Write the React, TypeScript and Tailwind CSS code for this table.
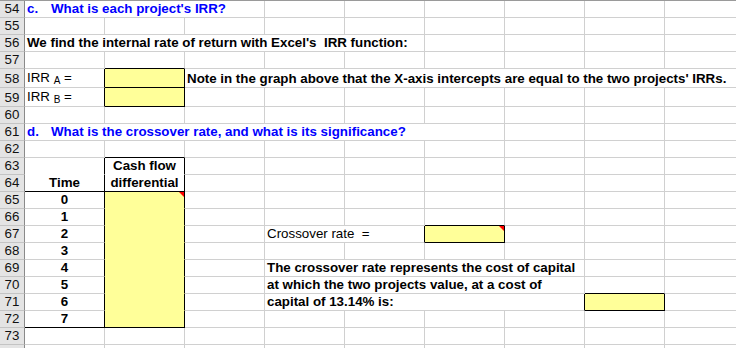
import React from 'react';

// Excel-ish sheet: header column 25px, data columns 80px, rows 17px
const SPAN_W: Record<number, string> = {
  1: 'w-[80px]',
  2: 'w-[160px]',
  3: 'w-[240px]',
  4: 'w-[320px]',
  5: 'w-[400px]',
  6: 'w-[480px]',
  7: 'w-[560px]',
};

const GRID_R = 'border-r-[#d0d0d0]';
const GRID_B = 'border-b-[#d0d0d0]';
const BLK_R = 'border-r-black';
const BLK_B = 'border-b-black';
const YEL = 'bg-[#ffff99]';

interface CellProps {
  span?: number;
  rb?: string;
  bb?: string;
  bg?: string;
  center?: boolean;
  comment?: boolean;
  children?: React.ReactNode;
}

const Cell: React.FC<CellProps> = ({
  span = 1,
  rb = GRID_R,
  bb = GRID_B,
  bg = 'bg-white',
  center = false,
  comment = false,
  children,
}) => (
  <div
    className={`relative flex h-full shrink-0 items-end border-r border-b ${SPAN_W[span]} ${rb} ${bb} ${bg} ${
      center ? 'justify-center' : 'justify-start pl-[2px]'
    }`}
  >
    {children !== undefined && <span className="whitespace-pre leading-[16px]">{children}</span>}
    {comment && (
      <span className="absolute right-0 top-0 h-0 w-0 border-l-[5px] border-t-[5px] border-l-transparent border-t-[#ff0000]" />
    )}
  </div>
);

interface RowProps {
  n?: number;
  tall?: boolean;
  children?: React.ReactNode;
}

const Row: React.FC<RowProps> = ({ n, tall = false, children }) => {
  // pad the row out with empty cells so the grid runs to the right edge
  let used = 0;
  React.Children.forEach(children, (c) => {
    if (React.isValidElement<CellProps>(c)) used += c.props.span ?? 1;
  });
  const pad = Array.from({ length: Math.max(0, 9 - used) }, (_, i) => <Cell key={`pad-${i}`} />);

  return (
    <div className={`flex ${tall ? 'h-[19px]' : 'h-[17px]'}`}>
      <div className="flex w-[25px] shrink-0 items-end justify-center border-r border-b border-r-[#8a8a8a] border-b-[#c4c4c4] bg-[#e4e4e4] leading-[16px] text-[#111]">
        {n}
      </div>
      {children}
      {pad}
    </div>
  );
};

const Blue: React.FC<{ label: string; text: string }> = ({ label, text }) => (
  <span className="font-bold text-[#0000ff]">
    <span className="inline-block w-[24px]">{label}</span>
    {text}
  </span>
);

const Sub: React.FC<{ l: string }> = ({ l }) => (
  <>
    IRR <span className="relative top-[2px] text-[10px]">{l}</span> =
  </>
);

export default function App() {
  const times = [0, 1, 2, 3, 4, 5, 6, 7];

  return (
    <div className="h-[348px] w-[736px] overflow-hidden bg-white font-['Liberation_Sans',Arial,sans-serif] text-[13.33px] text-black">
      <div className="h-px w-full bg-[#9a9a9a]" />

      <Row n={54}>
        <Cell span={3}>
          <Blue label="c." text="What is each project's IRR?" />
        </Cell>
      </Row>
      <Row n={55} />
      <Row n={56}>
        <Cell span={5}>
          <b>We find the internal rate of return with Excel's  IRR function:</b>
        </Cell>
      </Row>
      <Row n={57}>
        <Cell />
        <Cell bb={BLK_B} />
      </Row>
      <Row n={58} tall>
        <Cell rb={BLK_R}>
          <Sub l="A" />
        </Cell>
        <Cell rb={BLK_R} bb={BLK_B} bg={YEL} />
        <Cell span={7}>
          <b>Note in the graph above that the X-axis intercepts are equal to the two projects' IRRs.</b>
        </Cell>
      </Row>
      <Row n={59} tall>
        <Cell rb={BLK_R}>
          <Sub l="B" />
        </Cell>
        <Cell rb={BLK_R} bb={BLK_B} bg={YEL} />
      </Row>
      <Row n={60} />
      <Row n={61}>
        <Cell span={6}>
          <Blue label="d." text="What is the crossover rate, and what is its significance?" />
        </Cell>
      </Row>
      <Row n={62}>
        <Cell />
        <Cell bb={BLK_B} />
      </Row>
      <Row n={63}>
        <Cell rb={BLK_R} bb="border-b-white" />
        <Cell rb={BLK_R} bb="border-b-white" center>
          <b>Cash flow</b>
        </Cell>
      </Row>
      <Row n={64}>
        <Cell rb={BLK_R} bb={BLK_B} center>
          <b>Time</b>
        </Cell>
        <Cell rb={BLK_R} bb={BLK_B} center>
          <b>differential</b>
        </Cell>
      </Row>

      {times.map((t) => {
        const last = t === 7;
        return (
          <Row key={t} n={65 + t}>
            <Cell rb={BLK_R} bb={last ? BLK_B : GRID_B} center>
              <b>{t}</b>
            </Cell>
            <Cell rb={BLK_R} bb={last ? BLK_B : 'border-b-[#ffff99]'} bg={YEL} comment={t === 0} />
            {t === 1 && (
              <>
                <Cell />
                <Cell />
                <Cell />
                <Cell bb={BLK_B} />
              </>
            )}
            {t === 2 && (
              <>
                <Cell />
                <Cell span={2} rb={BLK_R}>
                  Crossover rate  =
                </Cell>
                <Cell rb={BLK_R} bb={BLK_B} bg={YEL} comment />
              </>
            )}
            {t === 4 && (
              <>
                <Cell />
                <Cell span={4}>
                  <b>The crossover rate represents the cost of capital</b>
                </Cell>
              </>
            )}
            {t === 5 && (
              <>
                <Cell />
                <Cell span={4}>
                  <b>at which the two projects value, at a cost of</b>
                </Cell>
                <Cell bb={BLK_B} />
              </>
            )}
            {t === 6 && (
              <>
                <Cell />
                <Cell span={4} rb={BLK_R}>
                  <b>capital of 13.14% is:</b>
                </Cell>
                <Cell rb={BLK_R} bb={BLK_B} bg={YEL} />
              </>
            )}
          </Row>
        );
      })}

      <Row n={73} />
      <Row />
    </div>
  );
}
